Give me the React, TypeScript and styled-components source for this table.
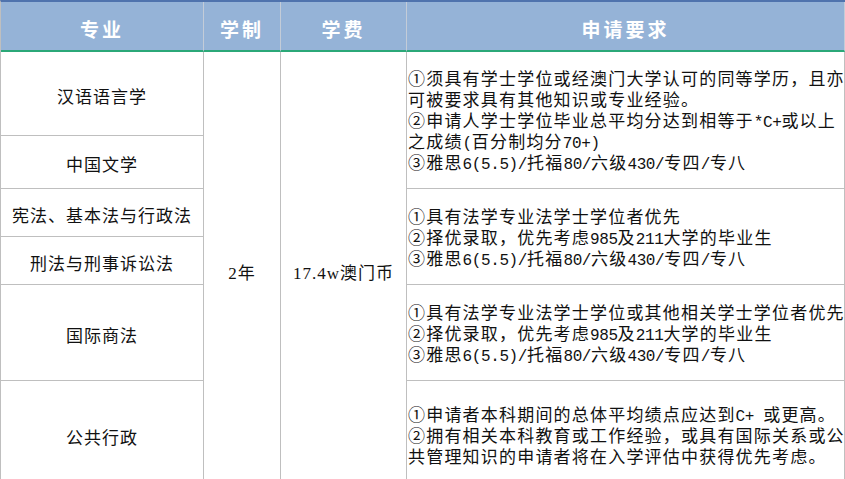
import styled, { createGlobalStyle } from "styled-components";

const Global = createGlobalStyle`
  html, body { margin: 0; padding: 0; background: #fff; overflow: hidden; }
  body { font-family: "Liberation Serif", "Noto Sans CJK SC", serif; color: #111; }
`;

const Table = styled.div`
  width: 845px;
  display: grid;
  grid-template-columns: 203px 77px 126px 1fr;
  grid-template-rows: 50px 84px 53px 48px 48px 96px 108px;
  border-top: 2px solid #4f73ad;
  border-left: 1px solid #bfbfbf;
  box-sizing: border-box;
`;

const Head = styled.div`
  background: #95b3d7;
  color: #fff;
  font-family: "Noto Sans CJK SC", sans-serif;
  font-weight: 700;
  font-size: 19px;
  letter-spacing: 3px;
  display: flex;
  align-items: center;
  justify-content: center;
  padding-top: 4px;
  box-sizing: border-box;
  border-right: 1px solid #c3ccd8;
  border-bottom: 2px solid #2ba878;
`;

const Cell = styled.div<{ $row: string; $col: number }>`
  grid-row: ${({ $row }) => $row};
  grid-column: ${({ $col }) => $col};
  border-right: 1px solid #bfbfbf;
  border-bottom: 1px solid #bfbfbf;
  box-sizing: border-box;
  display: flex;
  align-items: center;
  justify-content: center;
  font-size: 17px;
  letter-spacing: 1px;
  padding-top: 3px;
  white-space: nowrap;
  overflow: hidden;
`;

const Req = styled(Cell)`
  flex-direction: column;
  align-items: flex-start;
  justify-content: center;
  padding: 3px 0 0 1px;
  letter-spacing: 1.2px;
`;

const Line = styled.div`
  line-height: 21px;
  height: 21px;
`;

// half-width latin runs, set like the monospaced half-width glyphs of the sheet
const Latin = styled.span`
  font-family: "Liberation Mono", monospace;
  font-size: 16px;
  letter-spacing: -0.4px;
`;

const runs = (text: string) =>
  text.split(/([\x21-\x7e][\x20-\x7e]*)/).map((part, i) =>
    i % 2 ? <Latin key={i}>{part}</Latin> : part
  );

const majors: [string, string][] = [
  ["汉语语言学", "2"],
  ["中国文学", "3"],
  ["宪法、基本法与行政法", "4"],
  ["刑法与刑事诉讼法", "5"],
  ["国际商法", "6"],
  ["公共行政", "7"],
];

const reqs: [string, string[]][] = [
  [
    "2 / 4",
    [
      "①须具有学士学位或经澳门大学认可的同等学历，且亦",
      "可被要求具有其他知识或专业经验。",
      "②申请人学士学位毕业总平均分达到相等于*C+或以上",
      "之成绩(百分制均分70+)",
      "③雅思6(5.5)/托福80/六级430/专四/专八",
    ],
  ],
  [
    "4 / 6",
    [
      "①具有法学专业法学士学位者优先",
      "②择优录取，优先考虑985及211大学的毕业生",
      "③雅思6(5.5)/托福80/六级430/专四/专八",
    ],
  ],
  [
    "6",
    [
      "①具有法学专业法学士学位或其他相关学士学位者优先",
      "②择优录取，优先考虑985及211大学的毕业生",
      "③雅思6(5.5)/托福80/六级430/专四/专八",
    ],
  ],
  [
    "7",
    [
      "①申请者本科期间的总体平均绩点应达到C+ 或更高。",
      "②拥有相关本科教育或工作经验，或具有国际关系或公",
      "共管理知识的申请者将在入学评估中获得优先考虑。",
    ],
  ],
];

export default function App() {
  return (
    <>
      <Global />
      <Table>
        <Head>专业</Head>
        <Head>学制</Head>
        <Head>学费</Head>
        <Head>申请要求</Head>

        {majors.map(([name, row]) => (
          <Cell key={name} $row={row} $col={1}>
            {name}
          </Cell>
        ))}

        <Cell $row="2 / 8" $col={2}>2年</Cell>
        <Cell $row="2 / 8" $col={3}>17.4w澳门币</Cell>

        {reqs.map(([row, lines]) => (
          <Req key={row} $row={row} $col={4}>
            {lines.map((l) => (
              <Line key={l}>{runs(l)}</Line>
            ))}
          </Req>
        ))}
      </Table>
    </>
  );
}
